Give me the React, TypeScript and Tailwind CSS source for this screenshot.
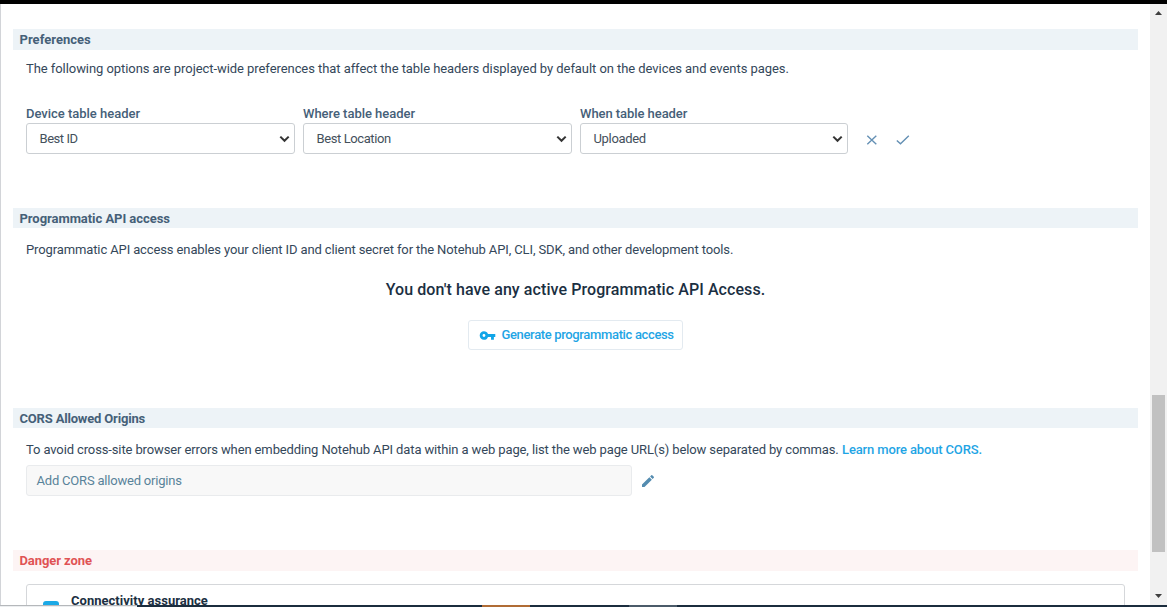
import type { ReactNode } from "react";
import { MdEdit, MdVpnKey } from "react-icons/md";

function SectionTitle({ children, className }: { children: ReactNode; className: string }) {
  return (
    <h2 className={`flex shrink-0 items-center pl-[6.5px] text-[13px] leading-5 font-bold whitespace-nowrap ${className}`}>
      {children}
    </h2>
  );
}

function SelectField({
  label,
  value,
  labelClass,
  valueClass,
  width,
}: {
  label: string;
  value: string;
  labelClass: string;
  valueClass: string;
  width: string;
}) {
  return (
    <div className={`flex flex-col ${width}`}>
      <span className={`h-[18px] text-[13px] leading-[18px] font-medium whitespace-nowrap text-[#456078] ${labelClass}`}>
        {label}
      </span>
      <div className="flex h-[31px] items-center justify-between rounded-[3px] border border-[#cbcfd3] bg-white pr-[4px] pl-[12.5px]">
        <span className={`text-[13px] leading-4 text-[#44505c] ${valueClass}`}>{value}</span>
        <svg width="11" height="8" viewBox="0 0 11 8" fill="none" stroke="#343434" strokeWidth="2">
          <path d="M1.3 1.6 5.5 5.8 9.7 1.6" />
        </svg>
      </div>
    </div>
  );
}

export default function App() {
  return (
    <div className="flex h-[607px] w-[1167px] flex-col overflow-hidden bg-white font-['Roboto','Liberation_Sans',sans-serif]">
      <div className="h-1 shrink-0 bg-black" />
      <div className="flex h-[601px] shrink-0">
        <main className="flex w-[1150px] flex-col overflow-hidden border-l border-[#d2d4d8] pr-3 pl-3">
          <SectionTitle className="mt-[25px] h-[21px] bg-[#edf3f7] tracking-[0.03px] text-[#456078]">Preferences</SectionTitle>
          <p className="mt-[10px] h-[18px] pl-[13px] text-[13px] leading-[18px] whitespace-nowrap text-[#34475a]">
            <span className="tracking-[-0.063px]">
              The following options are project-wide preferences that affect the table headers displayed by default on the devices and events pages.
            </span>
          </p>
          <div className="mt-[27px] flex gap-2 pl-[13px]">
            <SelectField label="Device table header" value="Best ID" width="w-[269px]" labelClass="tracking-[-0.02px]" valueClass="tracking-[-0.45px]" />
            <SelectField label="Where table header" value="Best Location" width="w-[269px]" labelClass="tracking-[-0.03px]" valueClass="tracking-[-0.4px]" />
            <SelectField label="When table header" value="Uploaded" width="w-[268px]" labelClass="tracking-[-0.06px]" valueClass="tracking-[-0.33px]" />
            <div className="flex items-start gap-[18px] pt-[29px] pl-[10px]">
              <svg width="12" height="12" viewBox="0 0 12 12" fill="none" stroke="#6490b4" strokeWidth="1.4">
                <path d="M1.3 1.8 10.3 10.2M10.3 1.8 1.3 10.2" />
              </svg>
              <svg width="14" height="12" viewBox="0 0 14 12" fill="none" stroke="#6490b4" strokeWidth="1.4">
                <path d="M.8 6.4 4.5 9.8 12.8 1.8" />
              </svg>
            </div>
          </div>

          <SectionTitle className="mt-[54px] h-5 bg-[#edf3f7] pt-px tracking-[-0.05px] text-[#456078]">Programmatic API access</SectionTitle>
          <p className="mt-[13px] h-[18px] pl-[13px] text-[13px] leading-[18px] whitespace-nowrap text-[#34475a]">
            <span className="tracking-[-0.118px]">
              Programmatic API access enables your client ID and client secret for the Notehub API, CLI, SDK, and other development tools.
            </span>
          </p>
          <div className="mt-5 flex flex-col items-center">
            <h3 className="h-[22px] text-[16px] leading-[22px] font-medium whitespace-nowrap text-[#1b2f42]">
              <span className="tracking-[0.08px]">You don't have any active Programmatic API Access.</span>
            </h3>
            <button className="mt-[19px] flex h-[30px] w-[215px] items-center rounded-[3px] border border-[#e3eaf0] pl-[9.5px] text-[13px] font-medium whitespace-nowrap text-[#1fa5e5]">
              <MdVpnKey className="mr-[6px] text-[#10a5e8]" size={17} />
              <span className="tracking-[-0.35px]">Generate programmatic access</span>
            </button>
          </div>

          <SectionTitle className="mt-[58px] h-5 bg-[#edf3f7] pt-px tracking-[-0.18px] text-[#456078]">CORS Allowed Origins</SectionTitle>
          <p className="mt-[13px] flex h-[18px] pl-[13px] text-[13px] leading-[18px] whitespace-nowrap text-[#34475a]">
            <span className="w-[816px] tracking-[-0.12px]">
              To avoid cross-site browser errors when embedding Notehub API data within a web page, list the web page URL(s) below separated by commas.
            </span>
            <a className="font-medium tracking-[-0.14px] text-[#1fa5e5]">Learn more about CORS.</a>
          </p>
          <div className="mt-[6px] flex items-center pl-[13px]">
            <div className="flex h-[31px] w-[606px] items-center rounded-[3px] border border-[#e9ebed] bg-[#f8f8f8] pl-[9.5px] text-[13px] text-[#59839a]">
              <span className="tracking-[-0.2px]">Add CORS allowed origins</span>
            </div>
            <MdEdit className="ml-2 text-[#548cb0]" size={16} />
          </div>

          <SectionTitle className="mt-[54px] h-[21px] bg-[#fdf4f4] tracking-[-0.08px] text-[#e05354]">Danger zone</SectionTitle>
          <div className="mt-[13px] mr-[13px] ml-[13px] flex h-[60px] shrink-0 items-start rounded-t-[3px] border border-[#d5d7da] pl-4">
            <div className="mt-4 h-4 w-4 rounded-[3px] bg-[#1ba9e6]" />
            <span className="mt-[7px] ml-3 text-[13px] leading-[18px] font-bold tracking-[0.02px] whitespace-nowrap text-[#1b2f42]">
              Connectivity assurance
            </span>
          </div>
        </main>
        <div className="flex w-[17px] flex-col items-center bg-[#f1f1f1]">
          <svg className="mt-[7px]" width="7" height="4" viewBox="0 0 7 4" fill="#3f3f3f">
            <path d="M0 4 3.5 0 7 4z" />
          </svg>
          <div className="mt-[380px] h-[157px] w-[13px] bg-[#c1c1c1]" />
          <svg className="mt-[42px]" width="7" height="4" viewBox="0 0 7 4" fill="#3f3f3f">
            <path d="M0 0 3.5 4 7 0z" />
          </svg>
        </div>
      </div>
      <div className="flex h-[2px] shrink-0 bg-[#1b2d3e]">
        <div className="w-[137px] border-t border-[#b5b8bb] bg-[#eceef0]" />
        <div className="ml-[345px] w-12 bg-[#b06c35]" />
        <div className="ml-[99px] w-12 bg-[#4b5b69]" />
      </div>
    </div>
  );
}
